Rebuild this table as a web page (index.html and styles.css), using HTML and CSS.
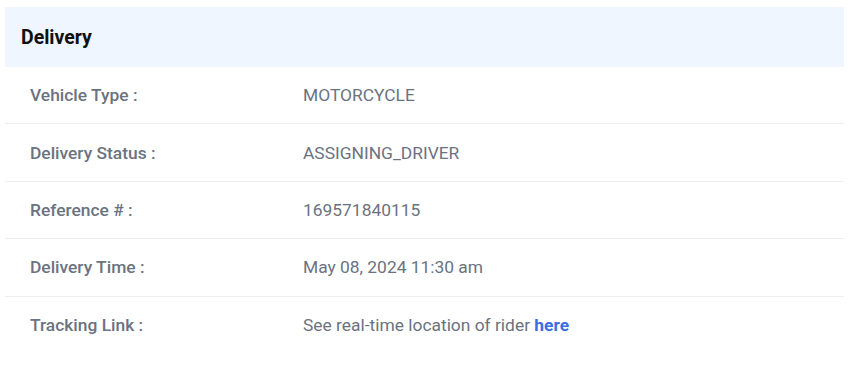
FILE: index.html
```html
<!DOCTYPE html>
<html lang="en">
<head>
<meta charset="utf-8">
<title>Delivery</title>
<link rel="stylesheet" href="styles.css">
</head>
<body>
<section class="card">
  <header class="card-head">Delivery</header>
  <dl class="details">
    <div class="row"><dt>Vehicle Type :</dt><dd>MOTORCYCLE</dd></div>
    <div class="row"><dt>Delivery Status :</dt><dd>ASSIGNING_DRIVER</dd></div>
    <div class="row"><dt>Reference # :</dt><dd>169571840115</dd></div>
    <div class="row"><dt>Delivery Time :</dt><dd>May 08, 2024 11:30 am</dd></div>
    <div class="row"><dt>Tracking Link :</dt><dd>See real-time location of rider <a class="link" href="#">here</a></dd></div>
  </dl>
</section>
</body>
</html>
```
FILE: styles.css
```css
html, body {
  margin: 0;
  padding: 0;
  background: #ffffff;
}

body {
  font-family: Roboto, "Noto Sans", sans-serif;
  padding: 7px 10px 0 5px;
}

.card {
  width: 839px;
}

.card-head {
  height: 60px;
  display: flex;
  align-items: center;
  padding-left: 16px;
  background: #f0f6ff;
  color: #111111;
  font-size: 19.5px;
  font-weight: 700;
}

.details {
  margin: 0;
}

.row {
  display: grid;
  grid-template-columns: 273px 1fr;
  align-items: center;
  height: 56.4px;
  padding-left: 25px;
  border-bottom: 1px solid #eceef1;
  font-size: 17.4px;
}

.row:last-child {
  border-bottom: none;
}

.row dt {
  font-weight: 500;
  color: #6b7280;
}

.row dd {
  margin: 0;
  color: #6b7280;
}

.link {
  color: #3b6ee3;
  font-weight: 700;
  text-decoration: none;
}
```
